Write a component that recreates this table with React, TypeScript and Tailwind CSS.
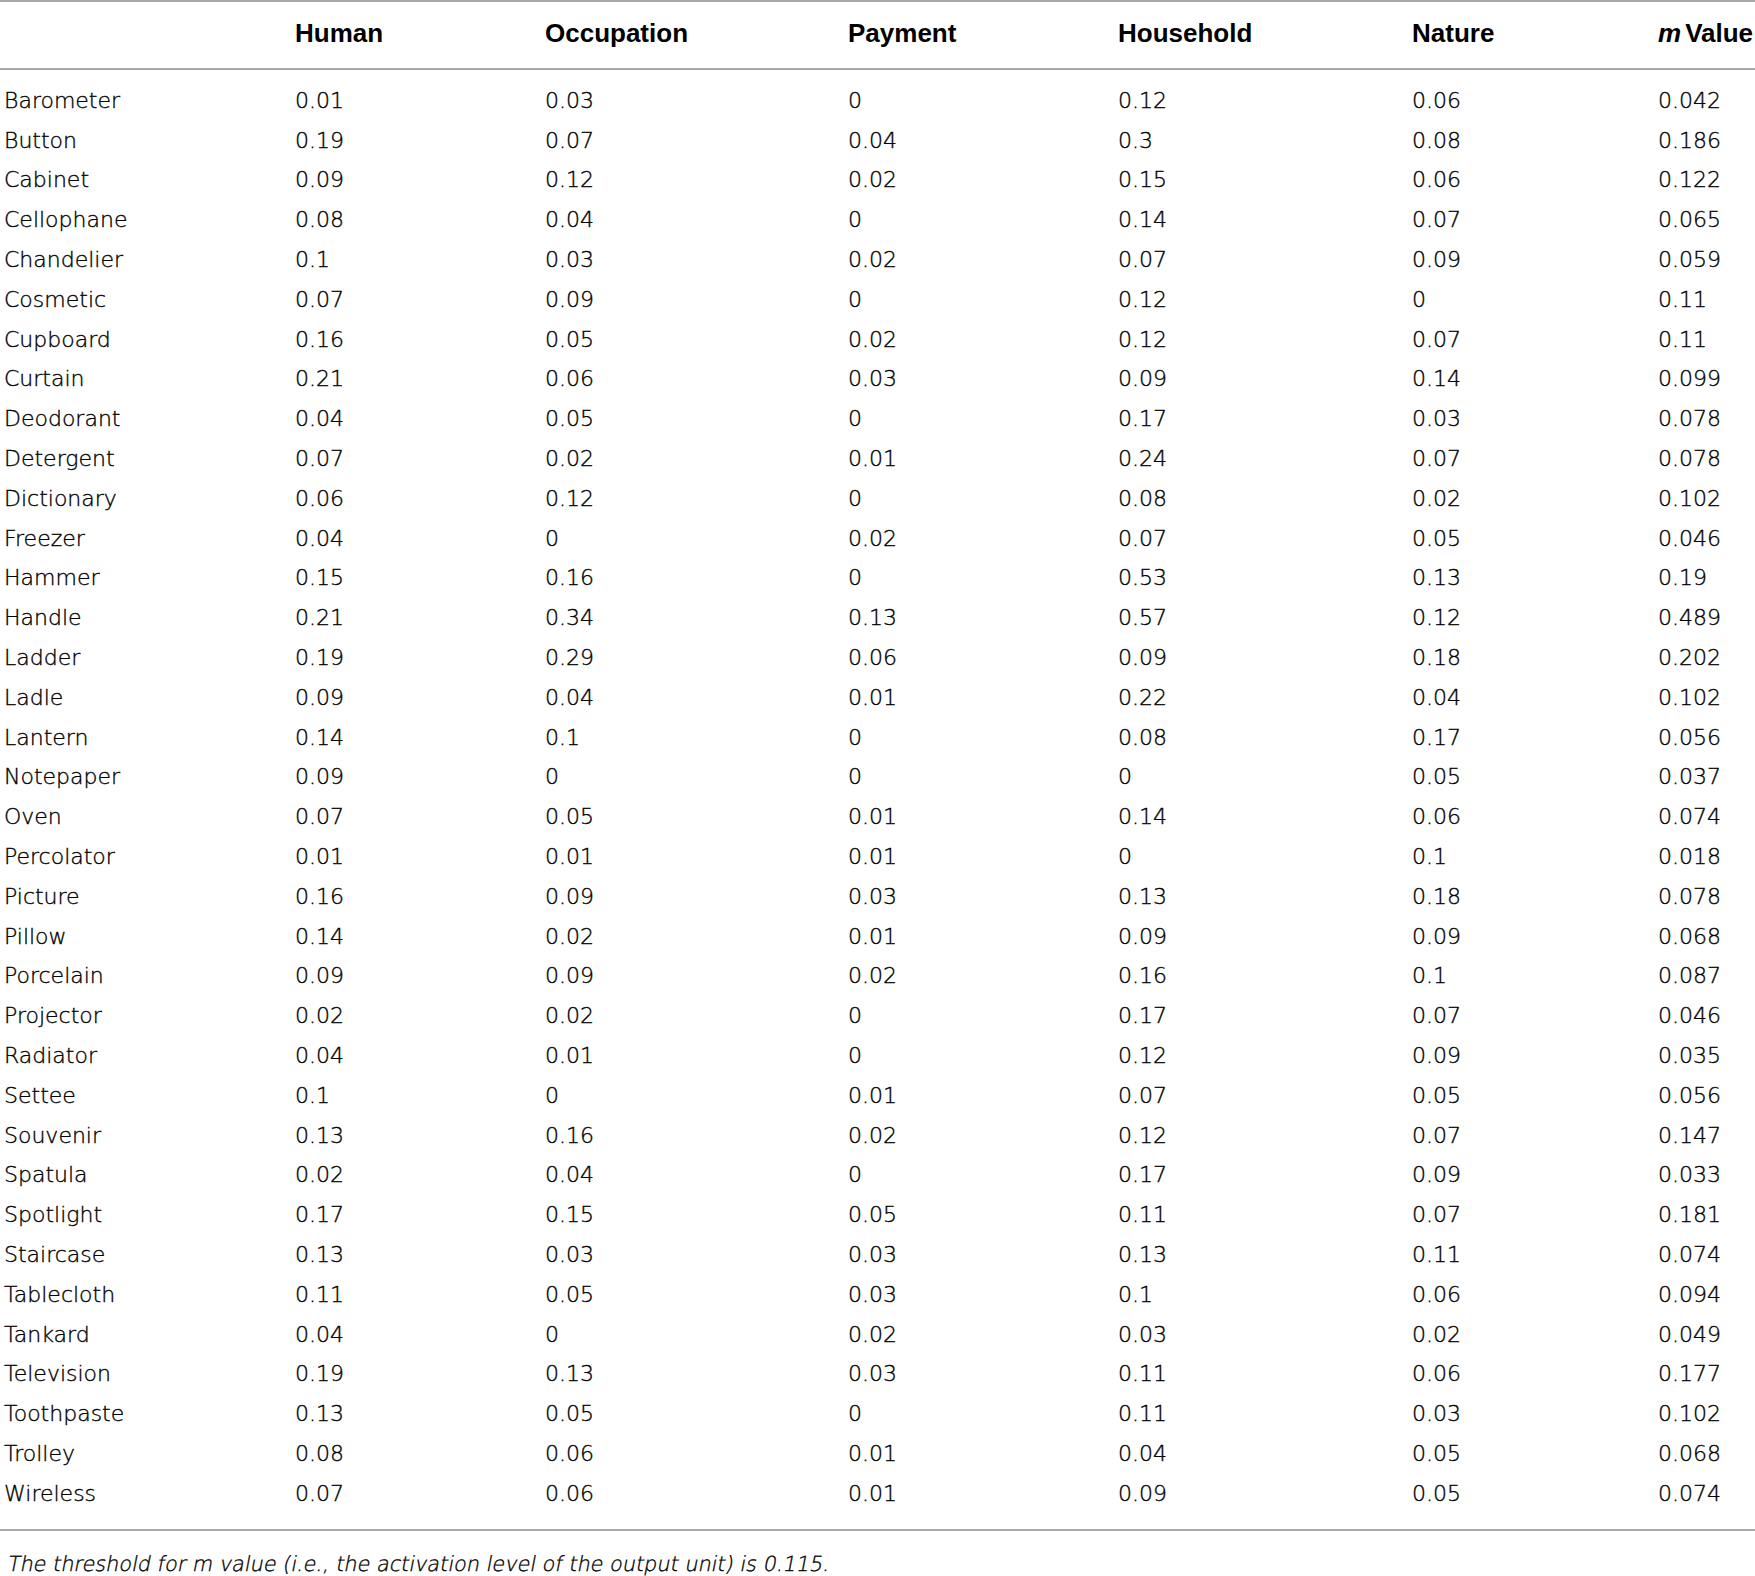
const rows: [string, string, string, string, string, string, string][] = [
  ["Barometer", "0.01", "0.03", "0", "0.12", "0.06", "0.042"],
  ["Button", "0.19", "0.07", "0.04", "0.3", "0.08", "0.186"],
  ["Cabinet", "0.09", "0.12", "0.02", "0.15", "0.06", "0.122"],
  ["Cellophane", "0.08", "0.04", "0", "0.14", "0.07", "0.065"],
  ["Chandelier", "0.1", "0.03", "0.02", "0.07", "0.09", "0.059"],
  ["Cosmetic", "0.07", "0.09", "0", "0.12", "0", "0.11"],
  ["Cupboard", "0.16", "0.05", "0.02", "0.12", "0.07", "0.11"],
  ["Curtain", "0.21", "0.06", "0.03", "0.09", "0.14", "0.099"],
  ["Deodorant", "0.04", "0.05", "0", "0.17", "0.03", "0.078"],
  ["Detergent", "0.07", "0.02", "0.01", "0.24", "0.07", "0.078"],
  ["Dictionary", "0.06", "0.12", "0", "0.08", "0.02", "0.102"],
  ["Freezer", "0.04", "0", "0.02", "0.07", "0.05", "0.046"],
  ["Hammer", "0.15", "0.16", "0", "0.53", "0.13", "0.19"],
  ["Handle", "0.21", "0.34", "0.13", "0.57", "0.12", "0.489"],
  ["Ladder", "0.19", "0.29", "0.06", "0.09", "0.18", "0.202"],
  ["Ladle", "0.09", "0.04", "0.01", "0.22", "0.04", "0.102"],
  ["Lantern", "0.14", "0.1", "0", "0.08", "0.17", "0.056"],
  ["Notepaper", "0.09", "0", "0", "0", "0.05", "0.037"],
  ["Oven", "0.07", "0.05", "0.01", "0.14", "0.06", "0.074"],
  ["Percolator", "0.01", "0.01", "0.01", "0", "0.1", "0.018"],
  ["Picture", "0.16", "0.09", "0.03", "0.13", "0.18", "0.078"],
  ["Pillow", "0.14", "0.02", "0.01", "0.09", "0.09", "0.068"],
  ["Porcelain", "0.09", "0.09", "0.02", "0.16", "0.1", "0.087"],
  ["Projector", "0.02", "0.02", "0", "0.17", "0.07", "0.046"],
  ["Radiator", "0.04", "0.01", "0", "0.12", "0.09", "0.035"],
  ["Settee", "0.1", "0", "0.01", "0.07", "0.05", "0.056"],
  ["Souvenir", "0.13", "0.16", "0.02", "0.12", "0.07", "0.147"],
  ["Spatula", "0.02", "0.04", "0", "0.17", "0.09", "0.033"],
  ["Spotlight", "0.17", "0.15", "0.05", "0.11", "0.07", "0.181"],
  ["Staircase", "0.13", "0.03", "0.03", "0.13", "0.11", "0.074"],
  ["Tablecloth", "0.11", "0.05", "0.03", "0.1", "0.06", "0.094"],
  ["Tankard", "0.04", "0", "0.02", "0.03", "0.02", "0.049"],
  ["Television", "0.19", "0.13", "0.03", "0.11", "0.06", "0.177"],
  ["Toothpaste", "0.13", "0.05", "0", "0.11", "0.03", "0.102"],
  ["Trolley", "0.08", "0.06", "0.01", "0.04", "0.05", "0.068"],
  ["Wireless", "0.07", "0.06", "0.01", "0.09", "0.05", "0.074"],
];

const cols = "grid grid-cols-[291px_250px_303px_270px_294px_246px_1fr] pl-[4px]";

export default function App() {
  return (
    <div className="w-[1755px] min-h-[1576px] bg-white text-black overflow-hidden font-['DejaVu_Sans',sans-serif]">
      <div className="border-t-2 border-[#a8a8a8]" />

      {/* header */}
      <div className={`${cols} h-[66px] pb-[4px] items-center font-['Liberation_Sans',Arial,sans-serif] font-bold text-[26px] leading-none`}>
        <span />
        <span>Human</span>
        <span>Occupation</span>
        <span>Payment</span>
        <span>Household</span>
        <span>Nature</span>
        <span className="whitespace-nowrap">
          <i>m</i>
          <span className="ml-[4px]">Value</span>
        </span>
      </div>
      <div className="border-t-2 border-[#a8a8a8]" />

      {/* body */}
      <div className="pt-[11px] pb-[15px] text-[22px] font-extralight [-webkit-text-stroke:0.35px_black]">
        {rows.map((r) => (
          <div key={r[0]} className={`${cols} h-[39.8px] items-center leading-none`}>
            {r.map((c, i) => (
              <span key={i}>{c}</span>
            ))}
          </div>
        ))}
      </div>
      <div className="border-t-2 border-[#a8a8a8]" />

      <p className="pl-[6px] pt-[23px] text-[20.8px] font-extralight leading-none [-webkit-text-stroke:0.35px_black]">
        <span className="inline-block origin-bottom-left -skew-x-[11deg]">
          The threshold for m value (i.e., the activation level of the output unit) is 0.115.
        </span>
      </p>
    </div>
  );
}
